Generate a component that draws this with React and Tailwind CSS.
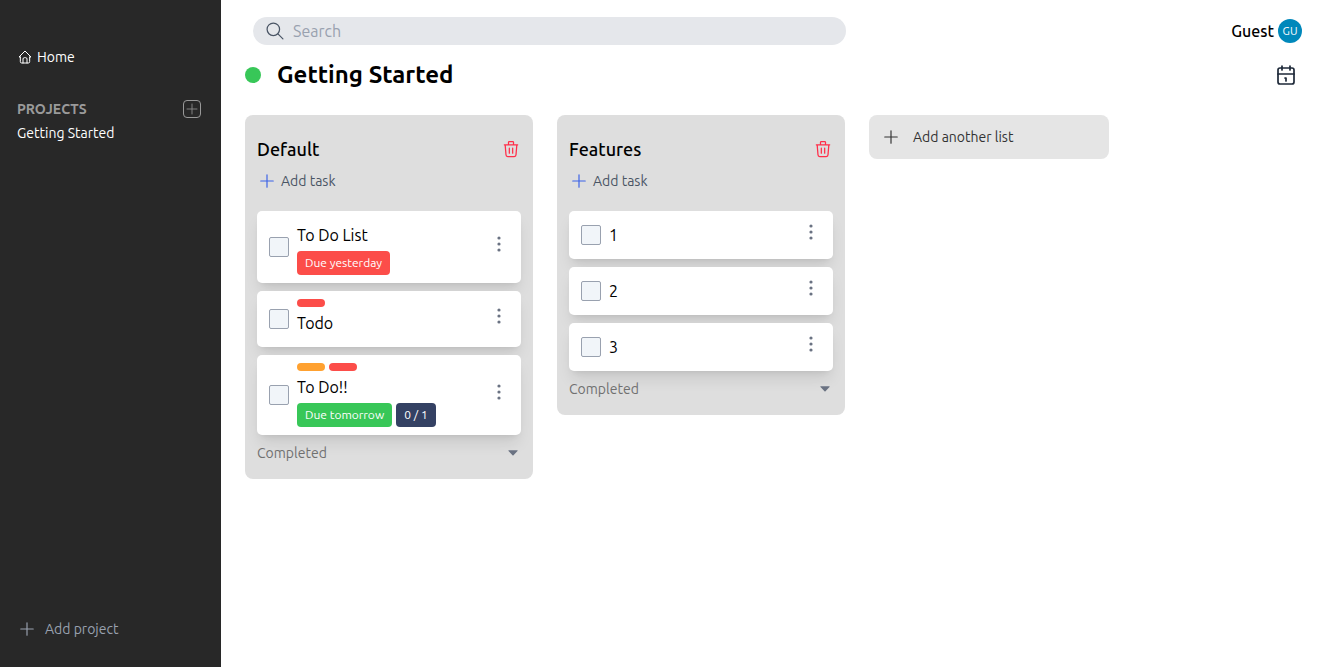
import { useState } from 'react';

function Icon({ className, width = 1.5, children }) {
  return (
    <svg
      viewBox="0 0 24 24"
      fill="none"
      stroke="currentColor"
      strokeWidth={width}
      strokeLinecap="round"
      strokeLinejoin="round"
      aria-hidden="true"
      className={className}
    >
      {children}
    </svg>
  );
}

function PlusIcon({ className }) {
  return (
    <Icon className={className} width={1.4}>
      <path d="M12 4.5v15M4.5 12h15" />
    </Icon>
  );
}

function TrashIcon() {
  return (
    <Icon className="size-5" width={1.5}>
      <path d="M4 7h16M10 11v6M14 11v6M5 7l1 12a2 2 0 0 0 2 2h8a2 2 0 0 0 2-2l1-12M9 7V4a1 1 0 0 1 1-1h4a1 1 0 0 1 1 1v3" />
    </Icon>
  );
}

function DotsIcon() {
  return (
    <svg viewBox="0 0 24 24" fill="currentColor" aria-hidden="true" className="size-6">
      <circle cx="12" cy="6" r="1.6" />
      <circle cx="12" cy="12" r="1.6" />
      <circle cx="12" cy="18" r="1.6" />
    </svg>
  );
}

function CaretIcon() {
  return (
    <svg viewBox="0 0 12 12" fill="currentColor" aria-hidden="true" className="size-3">
      <path d="M1.8 3.2h8.4c.4 0 .6.5.3.8L6.5 8.2c-.3.3-.7.3-1 0L1.5 4c-.3-.3-.1-.8.3-.8Z" />
    </svg>
  );
}

const labelColors = {
  red: 'bg-[#fc4d49]',
  orange: 'bg-[#ffa130]',
};

const lists = [
  {
    name: 'Default',
    tasks: [
      { name: 'To Do List', labels: [], badges: [{ text: 'Due yesterday', color: 'bg-[#fc4d49]' }] },
      { name: 'Todo', labels: ['red'], badges: [] },
      {
        name: 'To Do!!',
        labels: ['orange', 'red'],
        badges: [
          { text: 'Due tomorrow', color: 'bg-[#38c758]' },
          { text: '0 / 1', color: 'bg-[#344163]' },
        ],
      },
    ],
  },
  {
    name: 'Features',
    tasks: ['1', '2', '3'].map((name) => ({ name, labels: [], badges: [] })),
  },
];

function Task({ task }) {
  const [done, setDone] = useState(false);
  return (
    <li className="flex items-center rounded-[5px] bg-white py-2 pr-2.5 pl-3 shadow-lg">
      <label className="flex grow items-center gap-2">
        <input
          type="checkbox"
          checked={done}
          onChange={() => setDone(!done)}
          className="size-5 shrink-0 appearance-none rounded-xs border border-gray-400 bg-slate-100 checked:bg-slate-400"
        />
        <span className="flex flex-col">
          {task.labels.length > 0 && (
            <span className="flex gap-1">
              {task.labels.map((c) => (
                <span key={c} className={`h-2 w-7 rounded-full ${labelColors[c]}`} />
              ))}
            </span>
          )}
          <span className="py-1 text-base leading-6">{task.name}</span>
          {task.badges.length > 0 && (
            <span className="flex gap-1">
              {task.badges.map((b) => (
                <span key={b.text} className={`rounded-sm px-2 text-xs leading-6 text-white ${b.color}`}>
                  {b.text}
                </span>
              ))}
            </span>
          )}
        </span>
      </label>
      <button type="button" aria-label={`Options for ${task.name}`} className="mb-1.5 text-gray-500">
        <DotsIcon />
      </button>
    </li>
  );
}

function List({ list }) {
  return (
    <section className="w-72 shrink-0 rounded-lg bg-[#dedede] px-3 pt-5 pb-4">
      <header className="flex items-center justify-between">
        <h2 className="text-lg leading-7 font-medium">{list.name}</h2>
        <button type="button" aria-label={`Delete ${list.name}`} className="text-[#ff2e49]">
          <TrashIcon />
        </button>
      </header>
      <button type="button" className="mt-2 flex items-center gap-1 text-sm text-gray-600">
        <PlusIcon className="size-5 text-[#3b62e8]" />
        Add task
      </button>
      <ul className="mt-5 flex flex-col gap-2">
        {list.tasks.map((t) => (
          <Task key={t.name} task={t} />
        ))}
      </ul>
      <button type="button" className="mt-2 flex w-full items-center justify-between pr-0.5 text-sm text-[#707070]">
        Completed
        <span className="text-gray-500">
          <CaretIcon />
        </span>
      </button>
    </section>
  );
}

export default function App() {
  return (
    <div className="flex min-h-screen bg-white font-['Ubuntu','Noto_Sans',sans-serif] text-black">
      <aside className="flex w-[221px] shrink-0 flex-col bg-[#282828] px-[17px] pt-[47px] pb-7 text-sm text-white">
        <a href="#home" className="flex items-center gap-1">
          <Icon className="size-4" width={1.5}>
            <path d="M5 12H3l9-9 9 9h-2M5 12v7a2 2 0 0 0 2 2h10a2 2 0 0 0 2-2v-7" />
            <path d="M9 21v-6a2 2 0 0 1 2-2h2a2 2 0 0 1 2 2v6" />
          </Icon>
          Home
        </a>
        <div className="mt-8 flex items-center justify-between">
          <h2 className="font-bold text-[#9a9a9a]">PROJECTS</h2>
          <button
            type="button"
            aria-label="New project"
            className="mr-[3px] flex size-[18px] items-center justify-center rounded-sm border border-[#999999] text-[#888888]"
          >
            <PlusIcon className="size-4" />
          </button>
        </div>
        <a href="#getting-started" className="mt-1">Getting Started</a>
        <button type="button" className="mt-auto flex items-center gap-2 text-gray-400">
          <PlusIcon className="size-5" />
          Add project
        </button>
      </aside>

      <main className="flex min-w-0 grow flex-col">
        <div className="flex items-center justify-between pt-[17px] pr-4 pl-8">
          <div className="flex h-7 w-[593px] items-center gap-2 rounded-full bg-gray-200 px-3">
            <label htmlFor="search" aria-label="Search" className="text-gray-600">
              <Icon className="size-5">
                <circle cx="10" cy="10" r="7.5" />
                <path d="m15.5 15.5 6 6" />
              </Icon>
            </label>
            <input
              id="search"
              type="search"
              placeholder="Search"
              className="grow bg-transparent text-base leading-6 outline-none placeholder:text-gray-400"
            />
          </div>
          <div className="flex items-center gap-1">
            <span className="font-medium">Guest</span>
            <span className="flex size-6 items-center justify-center rounded-full bg-[#0088bb] text-[11px] text-white">GU</span>
          </div>
        </div>

        <div className="mt-3.5 flex items-center justify-between pr-5 pl-6">
          <div className="flex items-center gap-4">
            <span className="size-4 rounded-full bg-[#38c758]" />
            <h1 className="text-2xl leading-8 font-bold">Getting Started</h1>
          </div>
          <button type="button" aria-label="Calendar" className="text-gray-800">
            <Icon className="size-6" width={1.7}>
              <rect x="4" y="5" width="16" height="16" rx="2" />
              <path d="M16 3v4M8 3v4M4 11h16M11 15h1M12 15v3" />
            </Icon>
          </button>
        </div>

        <div className="mt-6 flex items-start gap-6 overflow-x-auto px-6 pb-6">
          {lists.map((l) => (
            <List key={l.name} list={l} />
          ))}
          <button
            type="button"
            className="flex h-11 w-60 shrink-0 items-center gap-3 rounded-lg bg-[#e5e5e5] px-3 text-sm text-[#333333]"
          >
            <PlusIcon className="size-5" />
            Add another list
          </button>
        </div>
      </main>
    </div>
  );
}
